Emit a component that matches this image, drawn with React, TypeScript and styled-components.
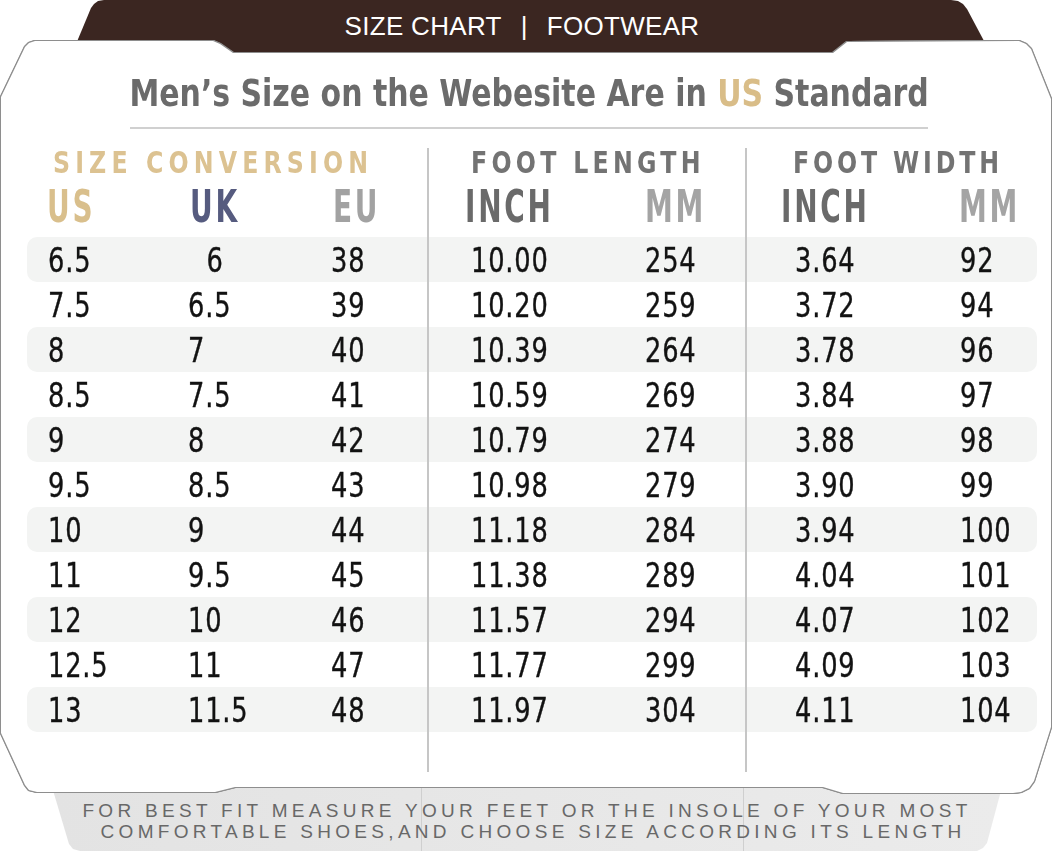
import React from "react";
import styled, { createGlobalStyle } from "styled-components";

const GlobalStyle = createGlobalStyle`
  html, body {
    margin: 0;
    padding: 0;
    background: #ffffff;
  }
  body {
    font-family: "DejaVu Sans", sans-serif;
  }
`;

const COND = `"DejaVu Sans Condensed", "DejaVu Sans", sans-serif`;
const ARIAL = `"Liberation Sans", Arial, sans-serif`;

const Sheet = styled.div`
  width: 1060px;
  height: 853px;
  overflow: hidden;
  display: flex;
  flex-direction: column;
  background: #ffffff;
`;

// brown folder tab at the top
const Tab = styled.div`
  flex: none;
  margin-left: 71px;
  width: 921px;
  height: 56px;
  box-sizing: border-box;
  padding: 9px 19px 0 0;
  background: #3b2621;
  clip-path: polygon(0 56px, 20px 8px, 23px 4px, 27px 1px, 33px 0, 880px 0, 887px 1px, 892px 4px, 896px 9px, 921px 56px);
  display: flex;
  justify-content: center;
  align-items: flex-start;
  gap: 19px;
  color: #ffffff;
  font-family: ${ARIAL};
  font-size: 26px;
  line-height: 34px;
  letter-spacing: 0.3px;
`;

const CardFrame = styled.div`
  position: relative;
  z-index: 2;
  flex: none;
  margin: -15px 0 0 1px;
  width: 1051px;
  height: 752px;
  filter: drop-shadow(1px 0 0 #8e8e8e) drop-shadow(-1px 0 0 #8e8e8e)
    drop-shadow(0 1px 0 #8e8e8e) drop-shadow(0 -1px 0 #8e8e8e);
`;

const Card = styled.div`
  width: 100%;
  height: 100%;
  box-sizing: border-box;
  padding: 28px 16px 0 26px;
  background: #ffffff;
  clip-path: polygon(
    0 56px, 24px 6px, 28px 2px, 34px 0, 212px 0, 219px 3px, 232px 12px,
    832px 12px, 846px 1px, 1018px 0, 1025px 3px, 1030px 8px, 1050px 58px,
    1050px 686px, 1033px 740px, 1028px 747px, 1020px 751px, 1012px 752px,
    842px 752px, 822px 746px, 234px 746px, 214px 751px, 36px 751px,
    28px 749px, 24px 744px, 0 692px
  );
  display: flex;
  flex-direction: column;
`;

const Heading = styled.div`
  margin-left: 103px;
  width: 798px;
  display: flex;
  flex-direction: column;
  align-items: center;
`;

const Title = styled.div`
  height: 50px;
  line-height: 50px;
  white-space: nowrap;
  font-family: ${COND};
  font-weight: 700;
  font-size: 37px;
  color: #6b6b6b;
  transform: scaleX(0.9);
`;

const Gold = styled.span`
  color: #d9bd88;
`;

const Rule = styled.div`
  align-self: stretch;
  margin-top: 8px;
  height: 2px;
  background: #d0d0d0;
`;

const Chart = styled.div`
  margin-top: 19px;
  display: grid;
  grid-template-columns: 400px 318px 292px;
`;

const Section = styled.div<{ $divided: boolean }>`
  box-sizing: border-box;
  padding-bottom: 40px;
  border-left: ${(p) => (p.$divided ? "2px solid #c6c6c6" : "none")};
  display: flex;
  flex-direction: column;
`;

const SectionTitle = styled.div<{ $pad: number; $color: string; $spacing: number }>`
  height: 28px;
  line-height: 28px;
  margin-left: ${(p) => p.$pad}px;
  white-space: nowrap;
  font-family: ${COND};
  font-weight: 700;
  font-size: 31px;
  letter-spacing: ${(p) => p.$spacing}px;
  color: ${(p) => p.$color};
  transform: scaleX(0.85);
  transform-origin: left center;
`;

const HeadRow = styled.div<{ $cols: string; $pad: number }>`
  height: 61px;
  line-height: 61px;
  padding-left: ${(p) => p.$pad}px;
  display: grid;
  grid-template-columns: ${(p) => p.$cols};
  font-family: ${COND};
  font-weight: 700;
  font-size: 45px;
  letter-spacing: 4px;
`;

const HeadCell = styled.div<{ $color: string }>`
  color: ${(p) => p.$color};
  white-space: nowrap;
  transform: scaleX(0.69);
  transform-origin: left center;
`;

const Row = styled.div<{ $cols: string; $pad: number; $band: boolean; $edge: "left" | "right" | "none" }>`
  height: 45px;
  line-height: 46px;
  padding-left: ${(p) => p.$pad}px;
  display: grid;
  grid-template-columns: ${(p) => p.$cols};
  background: ${(p) => (p.$band ? "#f3f4f3" : "transparent")};
  border-radius: ${(p) =>
    p.$edge === "left" ? "10px 0 0 10px" : p.$edge === "right" ? "0 10px 10px 0" : "0"};
  font-family: ${COND};
  font-size: 34px;
  letter-spacing: 1px;
  color: #121212;
  -webkit-text-stroke: 0.35px #121212;
`;

const Cell = styled.div<{ $indent?: number }>`
  padding-left: ${(p) => p.$indent ?? 0}px;
  white-space: nowrap;
  transform: scaleX(0.84);
  transform-origin: left center;
`;

// the two column rules run on faintly through the footer strip
const Banner = styled.div`
  position: relative;
  z-index: 1;
  flex: none;
  margin: -6px 0 0 52px;
  width: 950px;
  height: 64px;
  box-sizing: border-box;
  padding-top: 13px;
  background:
    linear-gradient(90deg, transparent 369px, #cfcfcf 369px, #cfcfcf 370px, transparent 370px,
      transparent 691px, #cfcfcf 691px, #cfcfcf 692px, transparent 692px),
    linear-gradient(90deg, #e3e3e3, #ebebeb);
  clip-path: polygon(0 0, 950px 0, 935px 56px, 931px 61px, 925px 64px, 28px 64px, 21px 62px, 17px 57px);
  font-family: ${ARIAL};
  font-size: 19px;
  line-height: 21px;
  letter-spacing: 4.3px;
  color: #686868;
  white-space: nowrap;
`;

const BannerLine = styled.div<{ $shift: number }>`
  text-align: center;
  padding-left: ${(p) => p.$shift}px;
`;

type Head = { label: string; color: string };
type SectionSpec = {
  title: string;
  titleColor: string;
  titlePad: number;
  titleSpacing: number;
  headCols: string;
  headPad: number;
  heads: Head[];
  cols: string;
  pad: number;
  edge: "left" | "right" | "none";
  columns: string[][];
};

const sections: SectionSpec[] = [
  {
    title: "SIZE CONVERSION",
    titleColor: "#dcc291",
    titlePad: 26,
    titleSpacing: 6,
    headCols: "143px 143px 1fr",
    headPad: 20,
    heads: [
      { label: "US", color: "#d9bf8c" },
      { label: "UK", color: "#565b7f" },
      { label: "EU", color: "#a2a2a2" },
    ],
    cols: "140px 143px 1fr",
    pad: 21,
    edge: "left",
    columns: [
      ["6.5", "7.5", "8", "8.5", "9", "9.5", "10", "11", "12", "12.5", "13"],
      ["6", "6.5", "7", "7.5", "8", "8.5", "9", "9.5", "10", "11", "11.5"],
      ["38", "39", "40", "41", "42", "43", "44", "45", "46", "47", "48"],
    ],
  },
  {
    title: "FOOT LENGTH",
    titleColor: "#737373",
    titlePad: 42,
    titleSpacing: 5,
    headCols: "180px 1fr",
    headPad: 36,
    heads: [
      { label: "INCH", color: "#6a6a6a" },
      { label: "MM", color: "#a4a4a4" },
    ],
    cols: "174px 1fr",
    pad: 42,
    edge: "none",
    columns: [
      ["10.00", "10.20", "10.39", "10.59", "10.79", "10.98", "11.18", "11.38", "11.57", "11.77", "11.97"],
      ["254", "259", "264", "269", "274", "279", "284", "289", "294", "299", "304"],
    ],
  },
  {
    title: "FOOT WIDTH",
    titleColor: "#737373",
    titlePad: 46,
    titleSpacing: 4.5,
    headCols: "178px 1fr",
    headPad: 34,
    heads: [
      { label: "INCH", color: "#6a6a6a" },
      { label: "MM", color: "#a4a4a4" },
    ],
    cols: "165px 1fr",
    pad: 48,
    edge: "right",
    columns: [
      ["3.64", "3.72", "3.78", "3.84", "3.88", "3.90", "3.94", "4.04", "4.07", "4.09", "4.11"],
      ["92", "94", "96", "97", "98", "99", "100", "101", "102", "103", "104"],
    ],
  },
];

const App: React.FC = () => {
  return (
    <>
      <GlobalStyle />
      <Sheet>
        <Tab>
          <span>SIZE CHART</span>
          <span>|</span>
          <span>FOOTWEAR</span>
        </Tab>
        <CardFrame>
          <Card>
            <Heading>
              <Title>
                Men’s Size on the Webesite Are in <Gold>US</Gold> Standard
              </Title>
              <Rule />
            </Heading>
            <Chart>
              {sections.map((s, si) => (
                <Section key={s.title} $divided={si > 0}>
                  <SectionTitle $pad={s.titlePad} $color={s.titleColor} $spacing={s.titleSpacing}>
                    {s.title}
                  </SectionTitle>
                  <HeadRow $cols={s.headCols} $pad={s.headPad}>
                    {s.heads.map((h) => (
                      <HeadCell key={h.label} $color={h.color}>
                        {h.label}
                      </HeadCell>
                    ))}
                  </HeadRow>
                  {s.columns[0].map((_, ri) => (
                    <Row key={ri} $cols={s.cols} $pad={s.pad} $band={ri % 2 === 0} $edge={s.edge}>
                      {s.columns.map((col, ci) => (
                        // the UK "6" sits a little right of the column in the chart
                        <Cell key={ci} $indent={si === 0 && ci === 1 && ri === 0 ? 22 : 0}>
                          {col[ri]}
                        </Cell>
                      ))}
                    </Row>
                  ))}
                </Section>
              ))}
            </Chart>
          </Card>
        </CardFrame>
        <Banner>
          <BannerLine $shift={0}>FOR BEST FIT MEASURE YOUR FEET OR THE INSOLE OF YOUR MOST</BannerLine>
          <BannerLine $shift={12}>COMFORTABLE SHOES,AND CHOOSE SIZE ACCORDING ITS LENGTH</BannerLine>
        </Banner>
      </Sheet>
    </>
  );
};

export default App;
